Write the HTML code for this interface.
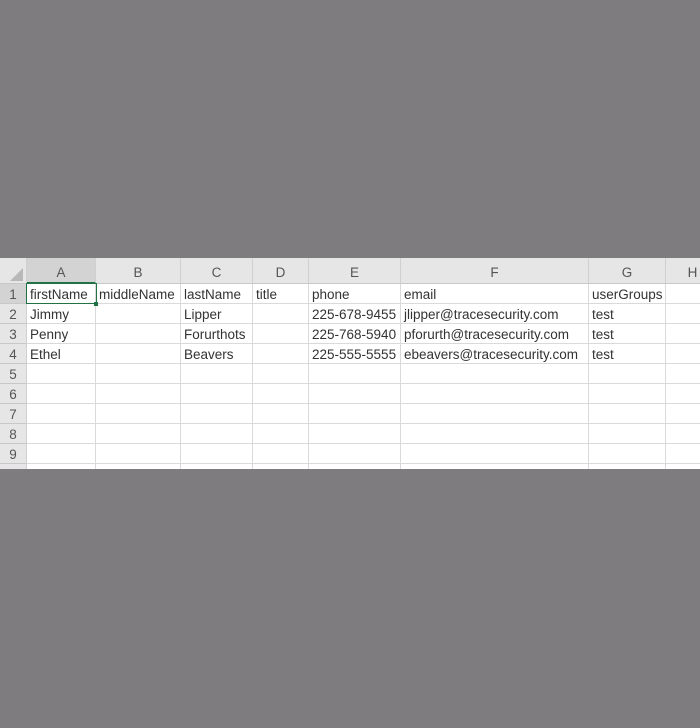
<!DOCTYPE html><html><head><style>
body{margin:0;width:700px;height:728px;background:#7f7c7f;position:relative;overflow:hidden;font-family:"Liberation Sans",sans-serif}
#s{position:absolute;left:0;top:258px;width:700px;height:211px;background:#fff;overflow:hidden}
.c{position:absolute;box-sizing:border-box;font-size:13.5px;color:#333;white-space:nowrap;line-height:21px;padding-left:3px}
.h{background:#e6e6e6;color:#555;text-align:center;padding:0;border-right:1px solid #d0d0d0;border-bottom:1px solid #c8c8c8}
.g{border-right:1px solid #dadada;border-bottom:1px solid #dadada}
</style></head><body><div id="s"></div>
<script>
var s=document.getElementById('s');
var cx=[0,27,96,181,253,309,401,589,666,720];
var rows=[["firstName","middleName","lastName","title","phone","email","userGroups",""],
["Jimmy","","Lipper","","225-678-9455","jlipper@tracesecurity.com","test",""],
["Penny","","Forurthots","","225-768-5940","pforurth@tracesecurity.com","test",""],
["Ethel","","Beavers","","225-555-5555","ebeavers@tracesecurity.com","test",""]];
var L="ABCDEFGH",h='';
function d(cls,x,y,w,hh,t,st){h+='<div class="c '+cls+'" style="left:'+x+'px;top:'+y+'px;width:'+w+'px;height:'+hh+'px;'+(st||'')+'">'+t+'</div>';}
d('h',0,0,27,26,'<svg width="27" height="26"><polygon points="23,10 23,23 10,23" fill="#b8b8b8"/></svg>');
for(var i=0;i<8;i++)d('h',cx[i+1],0,cx[i+2]-cx[i+1],26,L[i],'line-height:30px;'+(i==0?'background:#d3d3d3;border-bottom:2px solid #217346;':''));
for(var r=0;r<10;r++){var y=26+r*20;
d('h',0,y,27,20,r+1,r==0?'background:#d3d3d3;':'');
for(var i=0;i<8;i++)d('g',cx[i+1],y,cx[i+2]-cx[i+1],20,rows[r]?rows[r][i]:'');}
h+='<div style="position:absolute;left:26px;top:25px;width:71px;height:21px;border:1.5px solid #217346;box-sizing:border-box"></div><div style="position:absolute;left:94px;top:44px;width:4px;height:4px;background:#217346"></div>';
s.innerHTML=h;
</script></body></html>
